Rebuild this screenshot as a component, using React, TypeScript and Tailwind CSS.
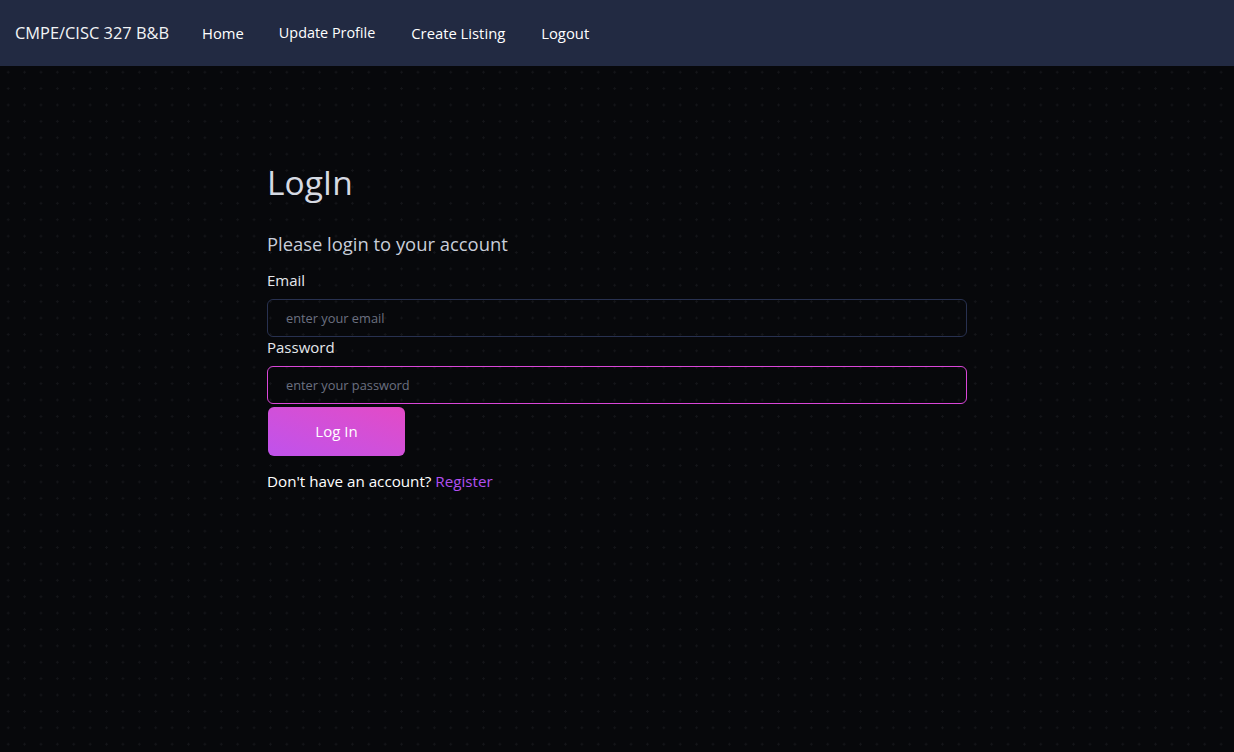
import React from 'react';

export default function App() {
  return (
    <div
      className="min-h-screen flex flex-col bg-[#07080b] text-white"
      style={{ fontFamily: '"Open Sans", "Noto Sans", sans-serif' }}
    >
      <nav className="h-[66px] bg-[#222a42] flex items-center pl-[15px] shrink-0">
        <span className="text-[16.4px] text-[#f3f4f6] mr-[33px]">CMPE/CISC 327 B&amp;B</span>
        <a className="text-[14.8px] text-white mr-[35px]">Home</a>
        <a className="text-[14.4px] text-white mr-[36px]">Update Profile</a>
        <a className="text-[14.8px] text-white mr-[36px]">Create Listing</a>
        <a className="text-[14.8px] text-white">Logout</a>
      </nav>

      <main className="flex-1 bg-[radial-gradient(#141519_1px,transparent_1.2px)] bg-[size:16.4px_16.4px] bg-[position:0px_-2px]">
        <div className="w-[700px] mx-auto pt-[96px]">
          <h1 className="text-[33.5px] leading-[40px] text-[#d6dae3] font-normal">LogIn</h1>
          <p className="mt-[30px] text-[18.4px] leading-[24px] text-[#c9ceda]">Please login to your account</p>

          <form className="mt-[15px] flex flex-col" onSubmit={(e) => e.preventDefault()}>
            <label className="text-[15px] leading-[18px] text-[#e5e7eb]">Email</label>
            <input
              type="email"
              placeholder="enter your email"
              className="mt-[10px] h-[38px] w-full rounded-[6px] border border-[#283150] bg-transparent px-[18px] text-[12.8px] text-white placeholder:text-[#6b7080] outline-none"
            />
            <label className="mt-[1px] text-[15px] leading-[18px] text-[#e5e7eb]">Password</label>
            <input
              type="password"
              placeholder="enter your password"
              className="mt-[10px] h-[38px] w-full rounded-[6px] border border-[#d946d8] bg-transparent px-[18px] text-[12.8px] text-white placeholder:text-[#6b7080] outline-none"
            />
            <button
              type="submit"
              className="mt-[3px] ml-[1px] w-[137px] h-[49px] rounded-[6px] bg-gradient-to-tr from-[#bf52ec] to-[#e34ac6] text-[15px] text-white"
            >
              Log In
            </button>
          </form>

          <p className="mt-[14px] text-[15.2px] text-white">
            Don't have an account? <a className="text-[#b14ff0]">Register</a>
          </p>
        </div>
      </main>
    </div>
  );
}
